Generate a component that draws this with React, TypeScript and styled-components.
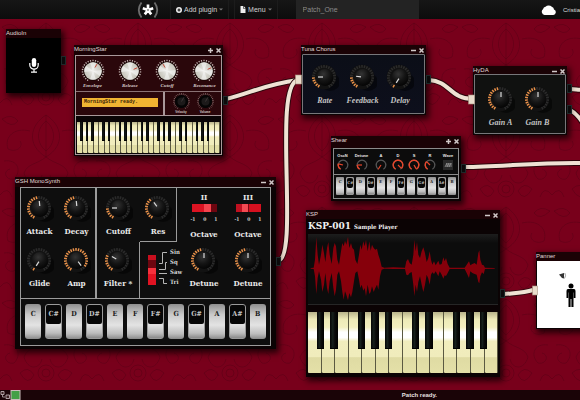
import React from "react";
import styled, { createGlobalStyle, css } from "styled-components";

const SANS = '"Liberation Sans", Arial, sans-serif';
const SLAB = '"DejaVu Serif Condensed", "DejaVu Serif", serif';

const GlobalStyle = createGlobalStyle`
  *, *::before, *::after { box-sizing: border-box; }
  body { margin: 0; background: #78001b; font-family: ${SANS}; }
  button, input { font: inherit; color: inherit; border: 0; padding: 0; margin: 0; background: none; }
  svg { display: block; flex: none; }
`;

const Page = styled.div`
  display: flex;
  flex-direction: column;
  min-height: 100vh;
  overflow: hidden;
`;

/* ---------- top bar ---------- */

const TopBar = styled.header`
  display: flex;
  align-items: stretch;
  height: 19px;
  padding-left: 137px;
  background: linear-gradient(#161616, #0c0c0c);
  color: #d2d2d2;
  font-size: 7px;
  white-space: nowrap;
  position: relative;
  z-index: 2;
`;

const Brand = styled.a`
  display: flex;
  align-items: center;
  margin-right: 11px;
`;

const NavButton = styled.button`
  display: flex;
  align-items: center;
  gap: 2px;
  padding: 0 5px;
  margin-right: 5px;
  border-left: 1px solid #1c1c1c;
  border-right: 1px solid #1c1c1c;
  font-size: 7px;
`;

const PatchName = styled.input`
  && {
    width: 123px;
    margin-left: 13px;
    padding: 0 7px;
    background: #232323;
    color: #8a8a8a;
    font-size: 7px;
    line-height: 19px;
  }
`;

const User = styled.a`
  display: flex;
  align-items: center;
  gap: 7px;
  margin-left: auto;
  color: #ddd;
  font-size: 6px;
  text-decoration: none;
`;

/* ---------- canvas and windows ---------- */

const Canvas = styled.main`
  position: relative;
  flex: 1;
  min-height: 371px;
  overflow: hidden;
  background: #78001b;
`;

const Layer = styled.svg`
  position: absolute;
  inset: 0;
  width: 100%;
  height: 100%;
`;

const Frame = styled.section<{ $x: number; $y: number; $w: number; $pad: string }>`
  position: absolute;
  left: ${(p) => p.$x}px;
  top: ${(p) => p.$y}px;
  width: ${(p) => p.$w}px;
  padding: ${(p) => p.$pad};
  background: #0b0304;
  box-shadow: 2px 3px 6px 1px rgba(20, 0, 4, 0.85);
`;

const TitleBar = styled.header<{ $h: number; $inset: number }>`
  display: flex;
  align-items: flex-start;
  height: ${(p) => p.$h}px;
  margin: 0 ${(p) => -p.$inset}px;
  background: #1a0205;
`;

const Title = styled.h2`
  flex: 1;
  margin: 0;
  color: #e2d8d8;
  font: 400 6px/8px ${SANS};
  white-space: nowrap;
`;

const TitleTools = styled.div`
  display: flex;
  gap: 3px;
  padding: 3px 2px 0 0;
`;

const ToolButton = styled.button`
  display: block;
  line-height: 0;
`;

const Port = styled.span<{ $y: number }>`
  position: absolute;
  left: 100%;
  top: ${(p) => p.$y}px;
  width: 5px;
  height: 9px;
  background: #0c0a0b;
  border: 1px solid #1d2a2a;
`;

type Tools = "min" | "plus" | "none";

function Win(p: {
  title: string;
  x: number;
  y: number;
  w: number;
  bar?: number;
  inset?: number;
  bottom?: number;
  tools?: Tools;
  ports?: number[];
  children: React.ReactNode;
}) {
  const { inset = 1, bottom = 1, tools = "min", bar = 9 } = p;
  return (
    <Frame $x={p.x} $y={p.y} $w={p.w} $pad={`0 ${inset}px ${bottom}px`}>
      <TitleBar $h={bar} $inset={inset}>
        <Title>{p.title}</Title>
        {tools !== "none" && (
          <TitleTools>
            <ToolButton aria-label={tools === "min" ? "Minimise" : "Expand"}>
              <svg width="5" height="5" viewBox="0 0 5 5" stroke="#d0c8c8" strokeWidth="1.5">
                <path d={tools === "min" ? "M0 2.5H5" : "M0 2.5H5M2.5 0V5"} />
              </svg>
            </ToolButton>
            <ToolButton aria-label="Close">
              <svg width="5" height="5" viewBox="0 0 5 5" stroke="#d0c8c8" strokeWidth="1.5">
                <path d="M.5 .5L4.5 4.5M4.5 .5L.5 4.5" />
              </svg>
            </ToolButton>
          </TitleTools>
        )}
      </TitleBar>
      {p.children}
      {(p.ports ?? []).map((y) => (
        <Port key={y} $y={y} />
      ))}
    </Frame>
  );
}

/* ---------- knobs ---------- */

const KnobLabel = styled.label<{ $font: "slab" | "italic" | "tiny" | "silver" | "micro"; $gap: number }>`
  position: relative;
  display: flex;
  flex-direction: column;
  align-items: center;
  gap: ${(p) => p.$gap}px;
  color: #e9e9e9;
  white-space: nowrap;
  ${(p) => p.$font === "slab" && css`font: 700 8px/12px ${SLAB};`}
  ${(p) => p.$font === "italic" && css`font: italic 700 8px/11px "Liberation Serif", serif; color: #c3c3c3;`}
  ${(p) => p.$font === "silver" && css`font: italic 700 5px/6px "Liberation Serif", serif; color: #d8cccc;`}
  ${(p) => p.$font === "micro" && css`font: 700 3px/4px ${SANS}; color: #d8cccc;`}
  ${(p) => p.$font === "tiny" && css`font: 700 4px/5px ${SANS}; flex-direction: column-reverse;`}
`;

const HiddenRange = styled.input`
  && {
    position: absolute;
    inset: 0;
    width: 100%;
    height: 100%;
    opacity: 0;
  }
`;

type KnobKind = "amber" | "silver" | "black" | "arc";

const polar = (r: number, deg: number): [number, number] => {
  const a = ((deg - 90) * Math.PI) / 180;
  return [r * Math.cos(a), r * Math.sin(a)];
};

const arcPath = (r: number, from: number, to: number) => {
  const [x1, y1] = polar(r, from);
  const [x2, y2] = polar(r, to);
  return `M${x1} ${y1}A${r} ${r} 0 ${to - from > 180 ? 1 : 0} 1 ${x2} ${y2}`;
};

function Ticks({ r1, r2, n, color, width }: { r1: number; r2: number; n: number; color: (i: number) => string; width: number }) {
  return (
    <>
      {Array.from({ length: n }, (_, i) => {
        const deg = -150 + (300 * i) / (n - 1);
        const [a, b] = polar(r1, deg);
        const [c, d] = polar(r2, deg);
        return <line key={i} x1={a} y1={b} x2={c} y2={d} stroke={color(i)} strokeWidth={width} />;
      })}
    </>
  );
}

function KnobArt({ kind, value }: { kind: KnobKind; value: number }) {
  const angle = -150 + 300 * value;
  if (kind === "amber") {
    const [x1, y1] = polar(2, angle);
    const [x2, y2] = polar(7, angle);
    return (
      <svg width="28" height="28" viewBox="-13 -13 28 28">
        <ellipse cx="6" cy="5" rx="10" ry="9" fill="#000" opacity=".45" />
        <circle r="12.3" fill="#121212" />
        <Ticks r1={9.2} r2={12} n={23} width={1.5} color={(i) => (i / 22 <= value * 0.94 + 0.02 ? "#e8914a" : "#2b2b2b")} />
        <circle cx="1" cy=".5" r="8.4" fill="url(#knobBody)" />
        <line x1={x1 + 1} y1={y1} x2={x2 + 1} y2={y2} stroke="#dadada" strokeWidth="1.2" />
      </svg>
    );
  }
  if (kind === "silver") {
    const [x1, y1] = polar(4, angle);
    const [x2, y2] = polar(8, angle);
    return (
      <svg width="24" height="24" viewBox="-12 -12 24 24">
        <Ticks r1={9.5} r2={11.3} n={23} width={1.1} color={() => "#c9bcb9"} />
        <circle r="9.8" fill="#170606" />
        <circle r="8.8" fill="#c4c2b6" />
        <path d="M0 0L-3 -8.3A8.8 8.8 0 0 1 3 -8.3ZM0 0L3 8.3A8.8 8.8 0 0 1 -3 8.3ZM0 0L-8.7 1A8.8 8.8 0 0 1 -7 -5.2ZM0 0L8.7 -1A8.8 8.8 0 0 1 7 5.2Z" fill="#fff" opacity=".6" />
        <circle r="8.8" fill="url(#silverGlow)" />
        <line x1={x1} y1={y1} x2={x2} y2={y2} stroke="#c24a3a" strokeWidth="1" />
      </svg>
    );
  }
  if (kind === "black") {
    const [x2, y2] = polar(5, angle);
    return (
      <svg width="17" height="17" viewBox="-8.5 -8.5 17 17">
        <Ticks r1={7} r2={8.2} n={23} width={0.7} color={() => "#b3a09e"} />
        <circle r="6.6" fill="#050505" />
        <circle r="4" fill="#1c1a1a" />
        <line x1="0" y1="0" x2={x2} y2={y2} stroke="#4a4444" strokeWidth=".7" />
      </svg>
    );
  }
  const [x2, y2] = polar(4.5, angle);
  return (
    <svg width="12" height="12" viewBox="-6 -6 12 12" fill="none">
      <path d={arcPath(4.8, -150, 150)} stroke="#575757" strokeWidth="1.2" />
      <path d={arcPath(4.8, -150, Math.max(angle, -140))} stroke="#e8452a" strokeWidth="1.4" />
      <line x1="0" y1="0" x2={x2} y2={y2} stroke="#e8452a" strokeWidth="1.2" />
    </svg>
  );
}

function Knob(p: { label: string; value: number; kind?: KnobKind; font: "slab" | "italic" | "tiny" | "silver" | "micro"; gap?: number }) {
  return (
    <KnobLabel $font={p.font} $gap={p.gap ?? 1}>
      <KnobArt kind={p.kind ?? "amber"} value={p.value} />
      {p.label}
      <HiddenRange type="range" min={0} max={1} step={0.01} defaultValue={p.value} />
    </KnobLabel>
  );
}

/* ---------- keyboards ---------- */

const Piano = styled.div<{ $h: number }>`
  display: flex;
  height: ${(p) => p.$h}px;
  overflow: hidden;
  background: #111;
`;

const IvoryKey = styled.button<{ $sharp: boolean }>`
  && {
    position: relative;
    flex: 1;
    border-right: 1px solid #5b5941;
    border-radius: 0 0 1px 1px;
    background: linear-gradient(#b8b38a 0, #eeeab8 12%, #f3efc0 25%, #fff 33%, #fff 42%, #f1edbd 48%, #f0ecbc 73%, #dfdba3 75%, #e4e0a8 100%);
  }
  ${(p) =>
    p.$sharp &&
    css`
      &::after {
        content: "";
        position: absolute;
        z-index: 1;
        top: 0;
        left: 70%;
        width: 60%;
        height: 61%;
        background: linear-gradient(90deg, #050505, #17201c 35%, #0b0b0b 60%, #000);
        border-bottom: 1px solid #000;
      }
    `}
`;

function Keyboard({ keys, sharps, h }: { keys: number; sharps: number[]; h: number }) {
  return (
    <Piano $h={h}>
      {Array.from({ length: keys }, (_, i) => (
        <IvoryKey key={i} $sharp={sharps.includes(i % 7) && i < keys - 1} aria-label={`Key ${i + 1}`} />
      ))}
    </Piano>
  );
}

const NoteRow = styled.div<{ $small?: boolean }>`
  display: grid;
  grid-template-columns: repeat(12, 1fr);
  gap: ${(p) => (p.$small ? 2 : 4)}px;
  padding: ${(p) => (p.$small ? "2px 2px 3px" : "5px 4px 6px")};
`;

const NoteKey = styled.button<{ $sharp: boolean; $small?: boolean }>`
  && {
    display: flex;
    height: ${(p) => (p.$small ? 18 : 35)}px;
    border: ${(p) => (p.$sharp ? "1px solid #9a9a9a" : "0")};
    border-radius: ${(p) => (p.$small ? 1 : 3)}px;
    background: linear-gradient(#8e8e8e, #c9c9c9 30%, #e3e3e3 60%, #bdbdbd 85%, #8a8a8a);
    color: #1a1a1a;
    font: 700 ${(p) => (p.$small ? "4px/10px" : "7px/18px")} ${SLAB};
  }
`;

const NoteName = styled.span<{ $sharp: boolean; $small?: boolean }>`
  flex: 1;
  height: ${(p) => (p.$small ? 10 : 19)}px;
  padding-top: ${(p) => (p.$small || p.$sharp ? 0 : 1)}px;
  border-radius: 2px;
  text-align: center;
  ${(p) =>
    p.$sharp &&
    css`
      background: #070707;
      color: #c4c4c4;
    `}
`;

const NOTES = ["C", "C#", "D", "D#", "E", "F", "F#", "G", "G#", "A", "A#", "B"];

function Notes({ small }: { small?: boolean }) {
  return (
    <NoteRow $small={small}>
      {NOTES.map((n) => (
        <NoteKey key={n} $sharp={n.length > 1} $small={small}>
          <NoteName $sharp={n.length > 1} $small={small}>
            {n}
          </NoteName>
        </NoteKey>
      ))}
    </NoteRow>
  );
}

/* ---------- AudioIn ---------- */

const MicPanel = styled.div`
  display: flex;
  align-items: center;
  justify-content: center;
  height: 55px;
  background: #000;
`;

/* ---------- MorningStar ---------- */

const StarPanel = styled.div`
  border: 1px solid #a8989a;
  background: #2a070b;
`;

const StarKnobs = styled.div`
  display: flex;
  justify-content: space-between;
  height: 35px;
  padding: 3px 4px 0;
`;

const StarCell = styled.div`
  display: flex;
  justify-content: center;
  width: 25px;
`;

const StarMiddle = styled.div`
  display: grid;
  grid-template-columns: 89px 1fr;
  height: 25px;
  border-top: 1px solid #8a7274;
  border-bottom: 1px solid #a8989a;
`;

const LcdCell = styled.div`
  padding: 6px 5px 0 6px;
  border-right: 2px solid #a8989a;
`;

const Lcd = styled.output`
  display: block;
  height: 9px;
  padding-left: 2px;
  background: #f0b432;
  color: #3a2206;
  font: 700 5px/9px "Liberation Mono", monospace;
  white-space: nowrap;
`;

const StarSmall = styled.div`
  display: flex;
  justify-content: space-around;
  padding: 1px 4px 0;
`;

const KeyBed = styled.div`
  padding: 6px 1px 1px;
  background: #0a0506;
`;

/* ---------- effect panels ---------- */

const FxPanel = styled.div<{ $bg: string; $h: number; $pad: string }>`
  display: flex;
  justify-content: space-between;
  height: ${(p) => p.$h}px;
  padding: ${(p) => p.$pad};
  border: 1px solid #77777a;
  border-radius: 1px;
  background: ${(p) => p.$bg};
`;

const FxCell = styled.div`
  display: flex;
  flex: 1;
  justify-content: center;
`;

/* ---------- Shear ---------- */

const ShearPanel = styled.div`
  border: 1px solid #8b8b8b;
  background: #0c0c0c;
`;

const ShearKnobs = styled.div`
  display: grid;
  align-items: start;
  grid-template-columns: 17px 21px 18px 16px 16px 16px 1fr;
  height: 26px;
  padding-top: 4px;
  border-bottom: 1px solid #8b8b8b;
`;

const WaveField = styled.label`
  display: flex;
  flex-direction: column;
  align-items: center;
  gap: 2px;
  color: #e9e9e9;
  font: 700 4px/5px ${SANS};
`;

const WaveButton = styled.button`
  && {
    padding: 1px;
    background: #292929;
  }
`;

/* ---------- MonoSynth ---------- */

const SynthPanel = styled.div`
  border: 1px solid #9b9b9b;
  background: #0e0e0e;
`;

const SynthGrid = styled.div`
  display: grid;
  grid-template-columns: 76px 43px 37px 1fr;
  grid-template-rows: 54px 56px;
  border-bottom: 1px solid #9b9b9b;
`;

const Envelope = styled.div`
  grid-row: 1 / span 2;
  display: grid;
  grid-template: 54px 56px / 1fr 1fr;
  border-right: 2px solid #9b9b9b;
`;

const SynthCell = styled.div<{ $right?: boolean; $bottom?: boolean; $top?: number }>`
  display: flex;
  justify-content: center;
  padding-top: ${(p) => p.$top ?? 7}px;
  border: 0 solid #9b9b9b;
  border-right-width: ${(p) => (p.$right ? 1 : 0)}px;
  border-bottom-width: ${(p) => (p.$bottom ? 1 : 0)}px;
`;

const WaveSelect = styled.div`
  position: relative;
  display: flex;
  gap: 3px;
  padding: 5px 0 0 8px;
`;

const WaveNames = styled.ul`
  margin: 0;
  padding: 0;
  list-style: none;
  color: #d6d6d6;
  font: 700 6px/10px ${SLAB};
`;

const RedSlider = styled.div`
  flex: none;
  width: 8px;
  height: 30px;
  margin-top: 8px;
  background: linear-gradient(#c80f1e 0 17%, #6d0610 17% 42%, #f5303c 42% 62%, #e01322 62%);
`;

const Oscillators = styled.div`
  grid-column: 4;
  grid-row: 1 / span 2;
  display: grid;
  grid-template-columns: 1fr 1fr;
  padding-left: 5px;
`;

const Oscillator = styled.div`
  display: flex;
  flex-direction: column;
  align-items: center;
  color: #e9e9e9;
  font: 700 8px/12px ${SLAB};
`;

const OscName = styled.h3`
  margin: 3px 0 1px;
  font: 700 8px/12px ${SLAB};
`;

const OctaveLabel = styled.label`
  position: relative;
  display: flex;
  flex-direction: column;
  align-items: center;
  height: 43px;
`;

const OctaveSwitch = styled.span<{ $left: boolean }>`
  width: 25px;
  height: 8px;
  background: ${(p) =>
    p.$left
      ? "linear-gradient(90deg, #c01020 0 25%, #f34a52 25% 48%, #7c0711 48% 52%, #d5101f 52%)"
      : "linear-gradient(90deg, #dc1322 0 50%, #f5444e 50% 75%, #6d0610 75%)"};
`;

const OctaveScale = styled.span`
  display: flex;
  justify-content: space-between;
  width: 27px;
  margin: 3px 0 4px;
  color: #cfcfcf;
  font: 700 5px/9px ${SLAB};
`;

/* ---------- KSP ---------- */

const KspHeading = styled.h3`
  display: flex;
  align-items: baseline;
  gap: 3px;
  margin: 0;
  color: #f0f0f0;
  font: 700 10px/14px ${SLAB};
  white-space: nowrap;
`;

const KspSub = styled.small`
  font-size: 6px;
`;

const WaveBox = styled.div`
  height: 71px;
  margin-bottom: 7px;
  border-bottom: 1px solid #262626;
  background: linear-gradient(#1d1d1d, #0c0c0c 9px);
`;

const WAVE: [number, number, number][] = [
  [35, 190, 192], [44, 189, 193], [48, 165, 215], [52, 98, 268], [56, 150, 220], [60, 180, 200], [66, 150, 225],
  [70, 120, 262], [75, 145, 240], [79, 172, 205], [84, 130, 250], [88, 112, 268], [92, 150, 230], [98, 178, 205],
  [103, 130, 250], [107, 115, 275], [111, 125, 255], [115, 165, 210], [120, 180, 200], [126, 140, 230],
  [130, 115, 262], [134, 125, 285], [138, 108, 260], [142, 120, 270], [147, 96, 287], [151, 130, 265],
  [156, 115, 278], [160, 130, 262], [165, 135, 230], [169, 165, 205], [175, 178, 200], [180, 150, 225],
  [184, 120, 250], [188, 135, 240], [193, 110, 258], [197, 125, 250], [201, 105, 275], [206, 140, 240],
  [211, 110, 268], [215, 138, 262], [219, 120, 245], [224, 130, 262], [229, 135, 250], [234, 132, 240],
  [238, 150, 255], [243, 165, 215], [248, 186, 195], [256, 189, 192], [283, 188, 193], [318, 189, 193],
  [322, 170, 210], [327, 163, 212], [332, 175, 205], [338, 180, 202], [343, 150, 240], [346, 105, 275],
  [350, 140, 240], [354, 112, 262], [358, 150, 232], [363, 160, 215], [368, 140, 240], [373, 128, 262],
  [378, 145, 240], [383, 172, 210], [388, 160, 222], [392, 140, 240], [396, 165, 210], [400, 180, 203],
  [405, 170, 208], [410, 182, 200], [418, 168, 215], [422, 180, 200], [428, 178, 210], [433, 158, 222],
  [437, 170, 212], [441, 160, 214], [446, 178, 205], [452, 189, 193], [497, 189, 193], [503, 180, 205],
  [510, 170, 220], [514, 182, 200], [520, 178, 205], [527, 175, 208], [533, 180, 210], [538, 145, 232],
  [541, 137, 236], [544, 165, 215], [549, 180, 203], [554, 182, 208], [558, 189, 193], [587, 190, 192],
];

const wavePoints = [
  ...WAVE.map(([x, t]) => `${x},${t}`),
  ...[...WAVE].reverse().map(([x, , b]) => `${x},${b}`),
].join(" ");

/* ---------- Panner ---------- */

const PannerPanel = styled.div`
  height: 67px;
  padding: 9px 0 0 22px;
  background: #fff;
`;

/* ---------- status bar ---------- */

const StatusBar = styled.footer`
  display: flex;
  align-items: center;
  height: 10px;
  background: #1a0407;
  color: #e6e0e0;
  font: 700 6px/10px ${SANS};
  position: relative;
`;

const StatusText = styled.p`
  flex: 1;
  margin: 0;
  padding-left: calc(66% - 2px);
`;

const CABLES = [
  "M226 80C252 74 262 66 298 61",
  "M278 242C300 238 272 66 298 61",
  "M429 61C450 62 450 80 473 80",
  "M570 70C575 70 578 71 584 71",
  "M570 91C576 94 580 99 584 106",
  "M465 148C500 148 540 143 584 144",
  "M504 275C514 274 524 274 533 271",
];

export default function App() {
  return (
    <Page>
      <GlobalStyle />
      <TopBar>
        <Brand href="#" aria-label="Home">
          <svg width="22" height="18" viewBox="0 0 22 18" fill="none">
            <path d="M4.5 1.5Q-1 9 4.5 16.5M17.5 1.5Q23 9 17.5 16.5" stroke="#6d6d6d" strokeWidth="1.8" />
            <path d="M11 9V3.5M11 9L16.2 7.3M11 9L14.2 13.4M11 9L7.800 13.4M11 9L5.800 7.3" stroke="#fff" strokeWidth="2.7" />
            <circle cx="11" cy="9" r=".8" fill="#333" />
          </svg>
        </Brand>
        <NavButton>
          <svg width="6" height="6" viewBox="0 0 6 6">
            <circle cx="3" cy="3" r="3" fill="#eee" />
            <path d="M3 1.5V4.5M1.5 3H4.5" stroke="#111" strokeWidth="1.1" />
          </svg>
          Add plugin
          <svg width="4" height="3" viewBox="0 0 4 3"><path d="M0 .5H4L2 2.5Z" fill="#777" /></svg>
        </NavButton>
        <NavButton>
          <svg width="6" height="7" viewBox="0 0 6 7"><path d="M.5 0H3V2.5H5.5V7H.5ZM3.6 0L5.5 2H3.6Z" fill="#eee" /></svg>
          Menu
          <svg width="4" height="3" viewBox="0 0 4 3"><path d="M0 .5H4L2 2.5Z" fill="#777" /></svg>
        </NavButton>
        <PatchName aria-label="Patch name" defaultValue="Patch_One" />
        <User href="#">
          <svg width="15" height="10" viewBox="0 0 15 10">
            <path d="M3.5 10A3.3 3.3 0 0 1 2 4.2A3.2 3.2 0 0 1 4.5 1.8A4.2 4.2 0 0 1 10.8 1.8A3.2 3.2 0 0 1 13 4.6A2.8 2.8 0 0 1 12.3 10Z" fill="#fff" />
          </svg>
          Cristia
        </User>
      </TopBar>

      <Canvas>
        <Layer aria-hidden="true">
          <defs>
            <pattern id="damask" width="92" height="92" patternUnits="userSpaceOnUse">
              <g fill="none" stroke="#4b000f" strokeOpacity=".38" strokeWidth="1">
                <path d="M46 4C30 14 26 34 46 46C66 34 62 14 46 4ZM46 10C36 18 36 32 46 40C56 32 56 18 46 10ZM46 4V46" />
                <path d="M30 20C14 16 4 26 8 38C16 42 24 36 20 30M62 20C78 16 88 26 84 38C76 42 68 36 72 30" />
                <path d="M4 50C18 48 22 60 14 68C6 70 2 60 10 58M88 50C74 48 70 60 78 68C86 70 90 60 82 58" />
                <path d="M46 46C36 54 28 52 24 62C28 76 40 74 42 64M46 46C56 54 64 52 68 62C64 76 52 74 50 64" />
                <circle cx="46" cy="78" r="8" /><circle cx="46" cy="78" r="4" />
                <path d="M20 78Q28 70 34 80Q28 92 20 78ZM72 78Q64 70 58 80Q64 92 72 78ZM0 84Q8 74 12 86M92 84Q84 74 80 86M2 8Q12 2 18 10Q12 18 2 8M90 8Q80 2 74 10Q80 18 90 8" />
              </g>
            </pattern>
            <radialGradient id="knobBody" cx=".4" cy=".3" r=".8">
              <stop offset="0" stopColor="#343434" /><stop offset=".5" stopColor="#141414" /><stop offset="1" stopColor="#000" />
            </radialGradient>
            <radialGradient id="silverGlow">
              <stop offset="0" stopColor="#fff" stopOpacity=".8" /><stop offset="1" stopColor="#ddd" stopOpacity=".15" />
            </radialGradient>
          </defs>
          <rect width="100%" height="100%" fill="url(#damask)" />
          {CABLES.map((d) => (
            <g key={d} fill="none">
              <path d={d} stroke="#2c060c" strokeWidth="6" />
              <path d={d} stroke="#efe2d4" strokeWidth="4" />
            </g>
          ))}
        </Layer>

        <Win title="AudioIn" x={6} y={10} w={55} tools="none" inset={0} bottom={0} ports={[27]}>
          <MicPanel>
            <svg width="10" height="15" viewBox="0 0 10 15" fill="none">
              <rect x="2.8" y="0" width="4.4" height="9" rx="2.2" fill="#fff" />
              <path d="M.8 5V7A4.2 4.2 0 0 0 9.2 7V5M5 11V14M2 14.2H8" stroke="#fff" strokeWidth="1.2" />
            </svg>
          </MicPanel>
        </Win>

        <Win title="MorningStar" x={74} y={26} w={149} bar={10} tools="plus" ports={[51]}>
          <StarPanel>
            <StarKnobs>
              {[["Envelope", 0.6], ["Release", 0.72], ["Cutoff", 0.4], ["Resonance", 0.72]].map(([l, v]) => (
                <StarCell key={l}>
                  <Knob label={l as string} value={v as number} kind="silver" font="silver" gap={0} />
                </StarCell>
              ))}
            </StarKnobs>
            <StarMiddle>
              <LcdCell>
                <Lcd>MorningStar ready.</Lcd>
              </LcdCell>
              <StarSmall>
                <Knob label="Velocity" value={0.6} kind="black" font="micro" gap={0} />
                <Knob label="Volume" value={0.6} kind="black" font="micro" gap={0} />
              </StarSmall>
            </StarMiddle>
            <KeyBed>
              <Keyboard keys={26} sharps={[0, 1, 2, 4, 5]} h={31} />
            </KeyBed>
          </StarPanel>
        </Win>

        <Win title="Tuna Chorus" x={301} y={26} w={125} ports={[30]}>
          <FxPanel $bg="linear-gradient(#0b0e17, #0d0f1c)" $h={60} $pad="9px 5px 0 3px">
            <FxCell><Knob label="Rate" value={0.2} font="italic" gap={3} /></FxCell>
            <FxCell><Knob label="Feedback" value={0.22} font="italic" gap={3} /></FxCell>
            <FxCell><Knob label="Delay" value={0.01} font="italic" gap={3} /></FxCell>
          </FxPanel>
        </Win>

        <Win title="HyDA" x={473} y={47} w={94} bar={8} ports={[18, 39]}>
          <FxPanel $bg="#101110" $h={60} $pad="11px 9px 0 7px">
            <FxCell><Knob label="Gain A" value={0.5} font="italic" gap={3} /></FxCell>
            <FxCell><Knob label="Gain B" value={0.5} font="italic" gap={3} /></FxCell>
          </FxPanel>
        </Win>

        <Win title="Shear" x={331} y={117} w={130} bar={12} inset={2} bottom={2} tools="plus" ports={[28]}>
          <ShearPanel>
            <ShearKnobs>
              {[["OscN", 0.25], ["Detune", 0.2], ["A", 0.01], ["D", 0.95], ["S", 1], ["R", 0.35]].map(([l, v]) => (
                <Knob key={l} label={l as string} value={v as number} kind="arc" font="tiny" />
              ))}
              <WaveField>
                Wave
                <WaveButton aria-label="Wave shape">
                  <svg width="8" height="8" viewBox="0 0 8 8" stroke="#aaa" strokeWidth=".7" fill="none">
                    <path d="M1 6L3 2V6L5 2V6L7 2V6" />
                  </svg>
                </WaveButton>
              </WaveField>
            </ShearKnobs>
            <Notes small />
          </ShearPanel>
        </Win>

        <Win title="GSH MonoSynth" x={15} y={158} w={261} bar={10} inset={5} bottom={3} ports={[80]}>
          <SynthPanel>
            <SynthGrid>
              <Envelope>
                <SynthCell><Knob label="Attack" value={0.48} font="slab" gap={2} /></SynthCell>
                <SynthCell><Knob label="Decay" value={0.48} font="slab" gap={2} /></SynthCell>
                <SynthCell $top={5}><Knob label="Glide" value={0.01} font="slab" gap={2} /></SynthCell>
                <SynthCell $top={5}><Knob label="Amp" value={0.98} font="slab" gap={2} /></SynthCell>
              </Envelope>
              <SynthCell><Knob label="Cutoff" value={0.2} font="slab" gap={2} /></SynthCell>
              <SynthCell $right $bottom><Knob label="Res" value={0.38} font="slab" gap={2} /></SynthCell>
              <SynthCell $right $top={5}><Knob label="Filter *" value={0.3} font="slab" gap={2} /></SynthCell>
              <WaveSelect>
                <RedSlider />
                <svg width="8" height="42" viewBox="0 0 8 42" fill="none" stroke="#b5b5b5" strokeWidth="1">
                  <path d="M8 5.5H3.5V16.5H0M8 15.5H6.5V22.5H0M0 26.5H8M0 31.5H4.5V36.5H8" />
                </svg>
                <WaveNames>
                  <li>Sin</li><li>Sq</li><li>Saw</li><li>Tri</li>
                </WaveNames>
                <HiddenRange type="range" min={0} max={3} defaultValue={1} aria-label="Waveform" />
              </WaveSelect>
              <Oscillators>
                {["II", "III"].map((name) => (
                  <Oscillator key={name}>
                    <OscName>{name}</OscName>
                    <OctaveLabel>
                      <OctaveSwitch $left={name === "III"} />
                      <OctaveScale><span>-1</span><span>0</span><span>1</span></OctaveScale>
                      Octave
                      <HiddenRange type="range" min={-1} max={1} defaultValue={0} />
                    </OctaveLabel>
                    <Knob label="Detune" value={0.5} font="slab" gap={2} />
                  </Oscillator>
                ))}
              </Oscillators>
            </SynthGrid>
            <Notes />
          </SynthPanel>
        </Win>

        <Win title="KSP" x={306} y={191} w={194} bar={9} inset={2} bottom={4} ports={[79]}>
          <KspHeading>KSP-001 <KspSub>Sample Player</KspSub></KspHeading>
          <WaveBox>
            <svg width="100%" height="70" viewBox="27 88 570 210" preserveAspectRatio="none" role="img" aria-label="Waveform">
              <polygon points={wavePoints} fill="#86000b" />
            </svg>
          </WaveBox>
          <Keyboard keys={14} sharps={[0, 1, 3, 4, 5]} h={61} />
        </Win>

        <Win title="Panner" x={536} y={233} w={62} tools="none" bottom={1}>
          <PannerPanel>
            <svg width="22" height="40" viewBox="0 0 22 40">
              <path d="M0 4.500L5 3V8.500L3 8Z" fill="#333" />
              <path d="M5.800 3Q7.500 5.500 5.500 8.500" fill="none" stroke="#777" strokeWidth=".7" />
              <circle cx="12" cy="16" r="2.5" />
              <path d="M9 19H15Q16.5 19 16.5 21V28H14.8V22.5H14.5V37H12.4V29H11.6V37H9.5V22.5H9.2V28H7.5V21Q7.5 19 9 19Z" />
            </svg>
          </PannerPanel>
        </Win>

        <Layer aria-hidden="true" pointerEvents="none">
          <g fill="#e9dccb" stroke="#a8927f" strokeWidth=".6">
            <rect x="295.5" y="56" width="6" height="9" />
            <rect x="468.5" y="76" width="6" height="9" />
            <rect x="532.5" y="267" width="5" height="9" />
          </g>
        </Layer>
      </Canvas>

      <StatusBar>
        <svg width="21" height="10" viewBox="0 0 21 10">
          <path d="M1 1.5H4V4.5H1ZM6 5H9.5V8.5H6Z" fill="#3a2022" stroke="#b9aeb0" strokeWidth=".9" />
          <path d="M2.5 5V7H5" stroke="#b9aeb0" strokeWidth=".8" fill="none" />
          <rect x="11" y=".5" width="9" height="9" fill="#43a047" stroke="#cbbcbc" />
        </svg>
        <StatusText role="status">Patch ready.</StatusText>
      </StatusBar>
    </Page>
  );
}
